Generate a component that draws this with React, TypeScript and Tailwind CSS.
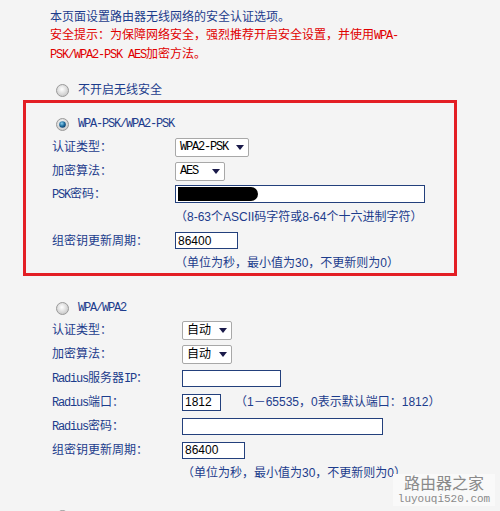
import React from "react";

const mono = "font-['Liberation_Mono','Noto_Sans_CJK_SC',monospace] text-[12px] tracking-[-1.2px]";

function M({ children }: { children: React.ReactNode }) {
  return <span className={mono}>{children}</span>;
}

function Radio({ checked = false }: { checked?: boolean }) {
  return (
    <svg width="13" height="13" viewBox="0 0 13 13" className="shrink-0">
      <defs>
        <radialGradient id="rg" cx="45%" cy="40%" r="60%">
          <stop offset="0%" stopColor="#ffffff" />
          <stop offset="100%" stopColor="#c8c8c8" />
        </radialGradient>
        <radialGradient id="dot" cx="40%" cy="35%" r="65%">
          <stop offset="0%" stopColor="#8fd0f0" />
          <stop offset="60%" stopColor="#1f6f9f" />
          <stop offset="100%" stopColor="#0f3f6f" />
        </radialGradient>
      </defs>
      <circle cx="6.5" cy="6.5" r="6" fill="url(#rg)" stroke="#9a9a9a" strokeWidth="1" />
      {checked && <circle cx="6.5" cy="6.5" r="3.3" fill="url(#dot)" />}
    </svg>
  );
}

function Select({ value, width, latin = false }: { value: string; width: number; latin?: boolean }) {
  return (
    <div
      className="flex h-[19px] items-center justify-between rounded-[2px] border border-[#a8a8a8] bg-white pl-[4px] pr-[4px] text-black"
      style={{ width }}
    >
      <span className={latin ? mono : "text-[12px]"}>{value}</span>
      <svg width="8" height="5" viewBox="0 0 8 5">
        <path d="M0 0 L8 0 L4 5 Z" fill="#1a1a4a" />
      </svg>
    </div>
  );
}

function Input({ width, value, redacted = false, h = 17 }: { width: number; value?: string; redacted?: boolean; h?: number }) {
  return (
    <div
      className="flex items-center border border-[#23407c] bg-white pl-[2px] text-[12px] text-black"
      style={{ width, height: h }}
    >
      {redacted && <div className="h-[14px] w-[80px] rounded-r-[7px] bg-black" />}
      {value && <span className="font-['Liberation_Sans',sans-serif]">{value}</span>}
    </div>
  );
}

function Row({ label, w, h, children }: { label?: React.ReactNode; w: number; h: number; children?: React.ReactNode }) {
  return (
    <div className="flex items-center" style={{ height: h }}>
      <div className="shrink-0" style={{ width: w }}>
        {label}
      </div>
      {children}
    </div>
  );
}

export default function App() {
  return (
    <div className="relative h-[511px] w-[500px] overflow-hidden bg-[#f4f4f4] font-['Liberation_Sans','Noto_Sans_CJK_SC',sans-serif] text-[12px] text-[#1c3c8c]">
      <div className="pl-[50px] pt-[8px] leading-[18px]">
        <div>本页面设置路由器无线网络的安全认证选项。</div>
        <div className="text-[#e00000]">
          安全提示：为保障网络安全，强烈推荐开启安全设置，并使用<M>WPA-</M>
        </div>
        <div className="text-[#e00000]">
          <M>PSK/WPA2-PSK AES</M>加密方法。
        </div>
      </div>

      <div className="mt-[14px] flex h-[24px] items-center gap-[9px] pl-[56px]">
        <Radio />
        <span>不开启无线安全</span>
      </div>

      <div className="ml-[23px] mt-[-2px] w-[434px] border-[3px] border-[#e31e24] pl-[26px] pt-[10px]">
        <div className="flex h-[22px] items-center gap-[9px] pl-[4px]">
          <Radio checked />
          <M>WPA-PSK/WPA2-PSK</M>
        </div>
        <Row w={123} h={24} label="认证类型：">
          <Select value="WPA2-PSK" width={74} latin />
        </Row>
        <Row w={123} h={24} label="加密算法：">
          <Select value="AES" width={50} latin />
        </Row>
        <Row w={123} h={22} label={<><M>PSK</M>密码：</>}>
          <Input width={250} h={18} redacted />
        </Row>
        <Row w={123} h={23}>
          <span>（8-63个ASCII码字符或8-64个十六进制字符）</span>
        </Row>
        <Row w={123} h={25} label="组密钥更新周期：">
          <Input width={63} value="86400" />
        </Row>
        <Row w={123} h={20}>
          <span>（单位为秒，最小值为30，不更新则为0）</span>
        </Row>
      </div>

      <div className="pl-[52px] pt-[22px]">
        <div className="flex h-[20px] items-center gap-[9px] pl-[4px]">
          <Radio />
          <M>WPA/WPA2</M>
        </div>
        <Row w={130} h={24} label="认证类型：">
          <Select value="自动" width={50} />
        </Row>
        <Row w={130} h={24} label="加密算法：">
          <Select value="自动" width={50} />
        </Row>
        <Row w={130} h={24} label={<><M>Radius</M>服务器<M>IP</M>：</>}>
          <Input width={99} />
        </Row>
        <Row w={130} h={24} label={<><M>Radius</M>端口：</>}>
          <Input width={39} value="1812" />
          <span className="ml-[14px]">（1－65535，0表示默认端口：1812）</span>
        </Row>
        <Row w={130} h={24} label={<><M>Radius</M>密码：</>}>
          <Input width={201} />
        </Row>
        <Row w={130} h={24} label="组密钥更新周期：">
          <Input width={63} value="86400" />
        </Row>
        <Row w={130} h={22}>
          <span>（单位为秒，最小值为30，不更新则为0）</span>
        </Row>
        <div className="mt-[22px] flex h-[20px] items-center pl-[4px]">
          <Radio />
        </div>
      </div>

      <div className="absolute left-[393px] top-[474px] flex h-[32px] w-[102px] flex-col items-center bg-[#f9f9f9] leading-none text-[#8a8a8a]">
        <span className="mt-[2px] text-[16px]">路由器之家</span>
        <span className="mt-[2px] font-['Liberation_Mono',monospace] text-[11px]">luyouqi520.com</span>
      </div>
    </div>
  );
}
